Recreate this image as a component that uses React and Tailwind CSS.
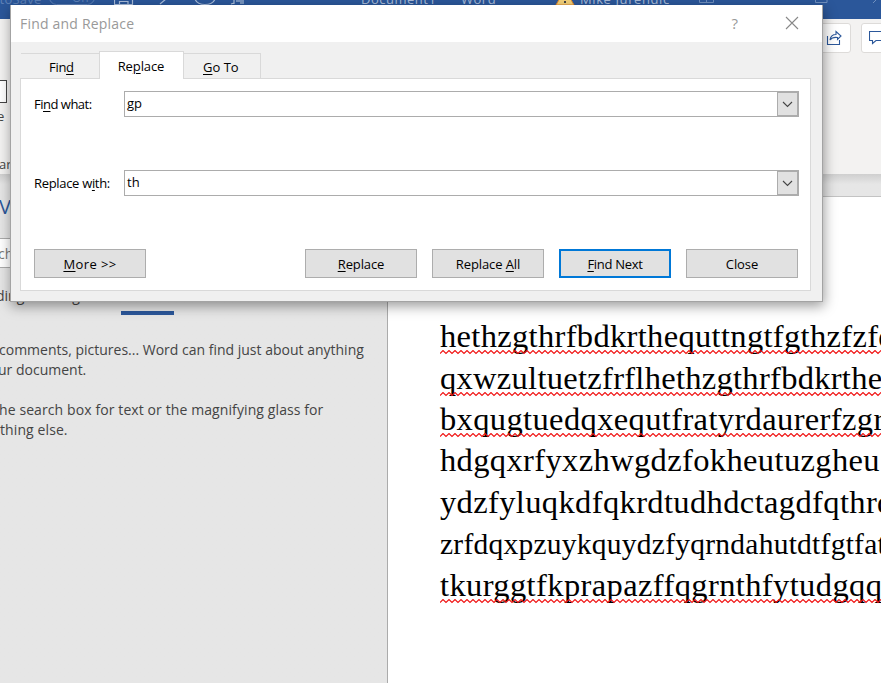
import React from "react";

const UI = "font-['Open_Sans','Noto_Sans',sans-serif]";

const wavePath =
  "M0 3.5" + Array.from({ length: 150 }, (_, i) => `L${i * 3 + 3} ${i % 2 ? 3.5 : 0.5}`).join("");

function Squiggle() {
  return (
    <svg className="absolute left-0 top-[34px] h-[5px] w-[441px]" fill="none" stroke="#f01010" strokeWidth="1.1" aria-hidden="true">
      <path d={wavePath} />
    </svg>
  );
}

const lines = [
  { text: "hethzgthrfbdkrthequttngtfgthzfzfd", wave: true, cls: "h-[42px] text-[32.5px] tracking-[0.33px]" },
  { text: "qxwzultuetzfrflhethzgthrfbdkrthe", wave: true, cls: "h-[41px] text-[32.5px] tracking-[0.29px]" },
  { text: "bxqugtuedqxequtfratyrdaurerfzgr", wave: true, cls: "h-[41px] text-[32.5px] tracking-[0.37px]" },
  { text: "hdgqxrfyxzhwgdzfokheutuzgheu", wave: false, cls: "h-[42px] text-[32.5px] tracking-[0.37px]" },
  { text: "ydzfyluqkdfqkrdtudhdctagdfqthrd", wave: false, cls: "h-[41px] text-[32.5px] tracking-[0.37px]" },
  { text: "zrfdqxpzuykquydzfyqrndahutdtfgtfat", wave: false, cls: "h-[42px] pt-px text-[29.5px] tracking-[0.25px]" },
  { text: "tkurggtfkprapazffqgrnthfytudgqq", wave: true, cls: "h-[41px] text-[32.5px] tracking-[0.39px]" },
];

function Combo({ value }) {
  return (
    <div className="flex h-[26px] w-[675px] border border-[#acacac] bg-white">
      <span className="flex-1 pl-[2px] text-[13px] leading-[23px]">{value}</span>
      <span className="flex h-[24px] w-[21px] items-center justify-center border border-[#acacac] bg-[#e1e1e1]">
        <svg width="11" height="7" viewBox="0 0 11 7" fill="none" stroke="#444" strokeWidth="1.1">
          <path d="M1 1l4.500 4.500L10 1" />
        </svg>
      </span>
    </div>
  );
}

function Button({ children, focus, className = "" }) {
  return (
    <button
      className={`flex h-[29px] w-[112px] items-center justify-center bg-[#e1e1e1] text-[13px] ${
        focus ? "border-2 border-[#0078d7]" : "border border-[#adadad]"
      } ${className}`}
    >
      <span className="mt-[2px] whitespace-pre">{children}</span>
    </button>
  );
}

const Key = ({ children }) => <span className="underline decoration-1 underline-offset-2">{children}</span>;

export default function App() {
  return (
    <div className={`relative h-[683px] w-[881px] overflow-hidden bg-[#e6e6e6] text-black ${UI}`}>
      <header className="flex h-[19px] overflow-hidden bg-[#2b579a] text-[13px] leading-[18px] text-[#a9bcd9]">
        <div className="-mt-[10px] flex h-[29px] w-full whitespace-pre">
          <span className="-ml-[17px] w-[66px] shrink-0 text-[#5f82b8] tracking-[0.2px]">AutoSave</span>
          <span className="mr-[19px] h-[15px] w-[46px] shrink-0 rounded-full border border-[#5f82b8] pl-[22px] text-[12px] leading-[14px] text-[#5f82b8]">On</span>
          <svg className="h-[18px] w-[135px] shrink-0" fill="none" stroke="#a9bcd9" strokeWidth="1.2">
            <path d="M.5 0V14.500H18.500V0M5.500 14V11.500H14V14M46 14L52 9M81 9Q83 14.500 91 14.500Q99 14.500 101 9M117 14L120 13M120 14V9M123 9V12M125 9V12M127 9V14M129 9V14" />
          </svg>
          <span className="ml-[112px] w-[100px] shrink-0 tracking-[0.5px]">Document1</span>
          <span className="w-[94px] shrink-0 tracking-[0.5px]">Word</span>
          <svg className="mt-[-2px] h-[18px] w-[20px] shrink-0" viewBox="0 0 20 18">
            <path d="M10 1L19 17H1Z" fill="#f5d27a" stroke="#e08a2c" />
            <path d="M10 7v5M10 13v2" stroke="#444" strokeWidth="2" />
          </svg>
          <span className="ml-[5px] w-[119px] shrink-0 tracking-[0.6px]">Mike Jurendic</span>
          <svg className="h-[18px] w-[182px] shrink-0" fill="none" stroke="#6f8fbe" strokeWidth="1">
            <path d="M.5 5V12.500H14.500V5M7.500 6V12M116.500 5V12.500H128V5M174 13L179 8" />
          </svg>
        </div>
      </header>

      <section className="flex h-[155px] justify-between bg-[#f3f2f1]">
        <div className="w-[11px] overflow-hidden text-[13px] text-[#444]">
          <div className="mt-[61px] h-[23px] w-[7px] border border-l-0 border-[#444] bg-white" />
          <div className="mt-[4px] -ml-[3px] leading-[18px]">e</div>
          <div className="mt-[30px] -ml-px leading-[18px]">ar</div>
        </div>
        <div className="mt-[4px] flex gap-[10px] overflow-hidden">
          <div className="flex h-[30px] w-[34px] items-center justify-end rounded-[3px] border border-[#dddbd9] bg-white pr-[8px]">
            <svg width="16" height="16" viewBox="0 0 16 16" fill="none" stroke="#2b579a" strokeWidth="1.1">
              <path d="M1.500 6V14.500H13.500V10M4 10C4.500 6.500 7 4.500 10 4.500V1.500L15 6L11.500 9.500V7.500C8 7 5.500 8 4 10Z" />
            </svg>
          </div>
          <div className="-mr-[20px] h-[30px] w-[40px] rounded-[3px] border border-[#dddbd9] bg-white pl-[7px] pt-[6px]">
            <svg width="20" height="16" viewBox="0 0 20 16" fill="none" stroke="#2b579a" strokeWidth="1.1">
              <path d="M.5 1.500H18V10.500H7L3.500 13.500V10.500H.5Z" />
            </svg>
          </div>
        </div>
      </section>

      <main className="flex h-[509px]">
        <aside className="w-[388px] overflow-hidden border-r border-[#ababab] bg-gradient-to-b from-[#cfcfcf] via-[#e6e6e6] via-[2%] to-[#e6e6e6] text-[#444]">
          <div className="mt-[18px] h-[30px] text-[20px] leading-[30px] text-[#2b579a]"><span className="-ml-px">V</span></div>
          <div className="mt-[16px] h-[30px] w-[240px] border border-l-0 border-[#ababab] bg-white text-[14px] leading-[29px] text-[#777]"><span className="-ml-[2px]">ch</span></div>
          <div className="mt-[18px] flex h-[20px] whitespace-pre text-[14px] leading-[20px]">
            <span className="-ml-[4px] w-[60px]">dings</span><span>Pages</span>
          </div>
          <div className="ml-[121px] mt-[5px] h-[4px] w-[53px] bg-[#2b579a]" />
          <div className="mt-[25px] whitespace-pre text-[14px] leading-[20px]">
            <p className="-ml-px">comments, pictures... Word can find just about anything</p>
            <p className="-ml-[2px]">ur document.</p>
            <p className="-ml-[1px] mt-[20px] tracking-[0.1px]">he search box for text or the magnifying glass for</p>
            <p className="tracking-[0.1px]">thing else.</p>
          </div>
        </aside>
        <section className="flex-1 overflow-hidden bg-gradient-to-b from-[#cfcfcf] to-[#e6e6e6] to-[2%] pt-[22px]">
          <article className="h-[487px] border-t border-[#c3c3c3] bg-white pl-[52px] pt-[119px] font-['Liberation_Serif','Times_New_Roman',serif]">
            {lines.map((l, i) => (
              <div key={i} className={`relative whitespace-pre leading-[41px] ${l.cls}`}>
                {l.text}
                {l.wave && <Squiggle />}
              </div>
            ))}
          </article>
        </section>
      </main>

      <div className="absolute left-[10px] top-[5px] flex h-[297px] w-[813px] flex-col border border-t-0 border-[#a3a3a3] bg-[#f0f0f0] shadow-[1px_4px_12px_rgba(0,0,0,0.4)]">
        <div className="flex h-[37px] shrink-0 items-center bg-white pl-[9px] pr-[23px] text-[#999]">
          <span className="flex-1 text-[14px] tracking-[0.2px]">Find and Replace</span>
          <span className="mr-[47px] text-[15px]">?</span>
          <svg className="-mt-px" width="14" height="14" viewBox="0 0 14 14" stroke="#888" strokeWidth="1.1"><path d="M1 1l12 12M13 1L1 13" /></svg>
        </div>
        <div className="flex h-[36px] shrink-0 items-end pl-[10px] text-[13px]">
          <div className="h-[25px] w-[78px] border-t border-[#d9d9d9] pl-[28px] leading-[27px] tracking-[-0.3px]">Fin<Key>d</Key></div>
          <div className="relative -mb-px h-[28px] w-[85px] border border-b-0 border-[#d9d9d9] bg-white pr-px text-center leading-[29px] tracking-[-0.1px]">Re<Key>p</Key>lace</div>
          <div className="h-[25px] w-[77px] border-r border-t border-[#d9d9d9] pl-[19px] leading-[27px]"><Key>G</Key>o To</div>
        </div>
        <div className="ml-[9px] flex h-[213px] w-[791px] flex-col border border-[#d9d9d9] bg-white pl-[13px] pt-[12px] text-[13px]">
          <div className="flex"><label className="w-[90px] leading-[26px] tracking-[-0.5px]">Fi<Key>n</Key>d what:</label><Combo value="gp" /></div>
          <div className="mt-[53px] flex"><label className="w-[90px] leading-[27px] tracking-[-0.32px]">Replace w<Key>i</Key>th:</label><Combo value="th" /></div>
          <div className="mt-[52px] flex gap-[15px]">
            <Button className="mr-[144px] tracking-[0.4px]"><Key>M</Key>ore &gt;&gt;</Button>
            <Button className="tracking-[-0.1px]"><Key>R</Key>eplace</Button>
            <Button className="tracking-[-0.1px]">Replace <Key>A</Key>ll</Button>
            <Button focus className="tracking-[-0.3px]"><Key>F</Key>ind Next</Button>
            <Button className="tracking-[-0.1px]">Close</Button>
          </div>
        </div>
      </div>
    </div>
  );
}
